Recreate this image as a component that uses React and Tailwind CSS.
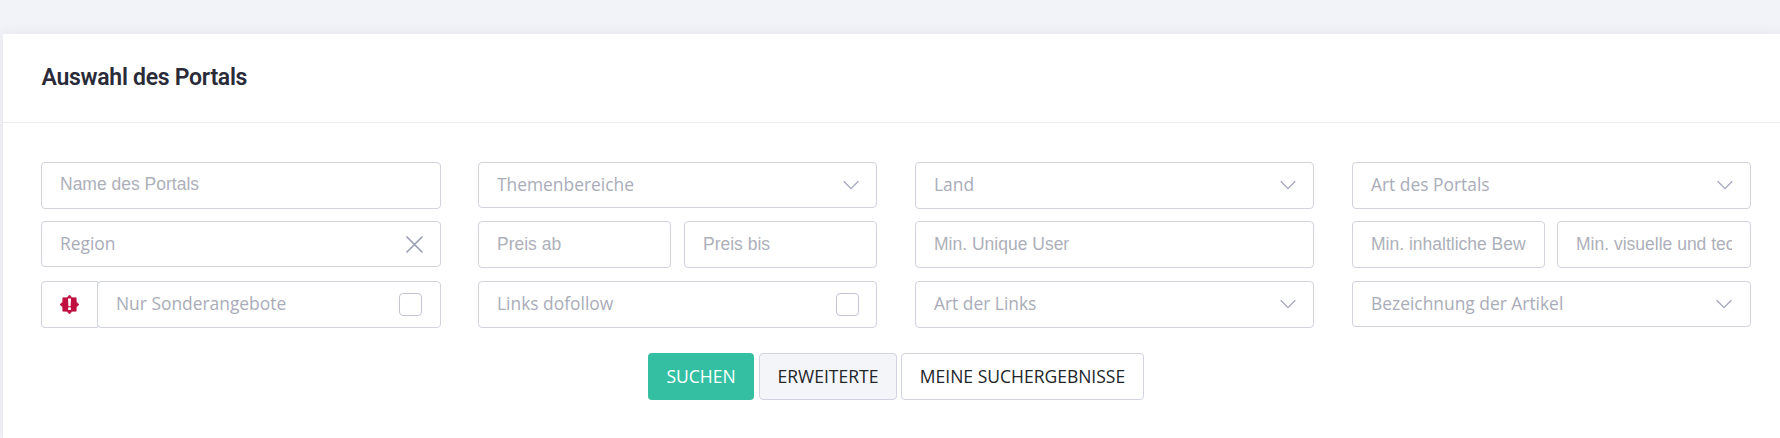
import clsx from 'clsx';

const sans = "font-['Open_Sans',sans-serif] font-[370]";
const field = 'flex items-center rounded-[4px] border border-[#d1d3de] bg-white text-[#a9acb9]';

function TextInput({ placeholder, className }) {
  return (
    <input
      type="text"
      placeholder={placeholder}
      className={clsx(field, "h-[47px] min-w-0 px-[18px] font-['Liberation_Sans',sans-serif] text-[17.5px] placeholder:text-[#adb0ba] outline-none", className)}
    />
  );
}

function Chevron() {
  return (
    <svg width="16" height="10" viewBox="0 0 16 10" fill="none" stroke="#a3a6bd" strokeWidth="1.3">
      <path d="M0.7 1.2 L8 8.6 L15.3 1.2" />
    </svg>
  );
}

function Select({ label, className }) {
  return (
    <div className={clsx(field, sans, 'justify-between pl-[18px] text-[17.4px]', className)}>
      <span className="pb-px whitespace-nowrap">{label}</span>
      <Chevron />
    </div>
  );
}

function CheckField({ label, className }) {
  return (
    <label className={clsx(field, sans, 'h-[47px] justify-between pl-[18px] text-[17.4px]', className)}>
      <span className="pb-[2px] whitespace-nowrap">{label}</span>
      <span className="size-[23px] rounded-[4px] border border-[#c3c5d2]" />
    </label>
  );
}

function BadgeAlert() {
  return (
    <svg width="19" height="19" viewBox="0 0 19 19">
      <path
        d="M9.5 0 L12 2.7 L16.2 2.8 L16.3 7 L19 9.5 L16.3 12 L16.2 16.2 L12 16.3 L9.5 19 L7 16.3 L2.8 16.2 L2.7 12 L0 9.5 L2.7 7 L2.8 2.8 L7 2.7 Z"
        fill="#bf1040"
        stroke="#bf1040"
        strokeWidth="0.6"
        strokeLinejoin="round"
      />
      <path d="M8 3.6 H11 L10.6 11.2 H8.4 Z" fill="#fff" />
      <rect x="8.1" y="12.3" width="2.8" height="2.8" rx="0.6" fill="#fff" />
    </svg>
  );
}

export default function App() {
  return (
    <div className="h-[438px] overflow-hidden bg-[#f2f3f8] pt-[34px] pl-[3px]">
      <div className="h-[404px] bg-white shadow-[0_0_13px_0_rgba(82,63,105,0.08)]">
        <header className="flex h-[89px] items-center border-b border-[#ebecf1] pl-[38.5px]">
          <h3 className="pt-px font-[Roboto,sans-serif] text-[23px] font-semibold tracking-[-0.28px] text-[#2a2b38]">Auswahl des Portals</h3>
        </header>

        <div className="grid grid-cols-[400px_399px_399px_399px] gap-x-[38px] pt-[39px] pl-[38px]">
          <div className="flex flex-col">
            <TextInput placeholder="Name des Portals" className="pb-[2px]" />
            <div className={clsx(field, sans, 'mt-3 h-[46px] justify-between pr-[17px] pl-[18px] text-[17.4px]')}>
              <span className="pb-px">Region</span>
              <svg width="17" height="17" viewBox="0 0 17 17" stroke="#9c9fb8" strokeWidth="1.7" strokeLinecap="round">
                <path d="M1 1 L16 16 M16 1 L1 16" />
              </svg>
            </div>
            <div className="mt-[14px] flex">
              <div className={clsx(field, 'h-[47px] w-[57px] justify-center rounded-r-none')}>
                <BadgeAlert />
              </div>
              <CheckField label="Nur Sonderangebote" className="-ml-px flex-1 pr-[18px]" />
            </div>
          </div>

          <div className="-ml-px flex w-[399px] flex-col">
            <Select label="Themenbereiche" className="h-[46px] pr-[17.5px]" />
            <div className="mt-[13px] grid grid-cols-2 gap-[13px]">
              <TextInput placeholder="Preis ab" />
              <TextInput placeholder="Preis bis" />
            </div>
            <CheckField label="Links dofollow" className="mt-[13px] pr-[17px]" />
          </div>

          <div className="-ml-px flex w-[399px] flex-col">
            <Select label="Land" className="h-[47px] pr-[17px] pb-px" />
            <TextInput placeholder="Min. Unique User" className="mt-3" />
            <Select label="Art der Links" className="mt-[13px] h-[47px] pr-[17px] pb-px" />
          </div>

          <div className="-ml-px flex w-[399px] flex-col">
            <Select label="Art des Portals" className="h-[47px] pr-[17px] pb-px" />
            <div className="mt-3 grid grid-cols-[193px_194px] gap-3">
              <TextInput placeholder="Min. inhaltliche Bew" />
              <TextInput placeholder="Min. visuelle und tech" />
            </div>
            <Select label="Bezeichnung der Artikel" className="mt-[13px] h-[46px] pr-[18px]" />
          </div>
        </div>

        <div className={clsx(sans, 'mt-[25px] flex pl-[645px] text-[17.5px] text-[#212529]')}>
          <button className="h-[47px] w-[106px] rounded-[4px] bg-[#34bfa3] text-white">SUCHEN</button>
          <button className="ml-[5px] h-[47px] w-[138px] rounded-[4px] border border-[#d1d3e0] bg-[#f4f5f8]">ERWEITERTE</button>
          <button className="ml-1 h-[47px] w-[243px] rounded-[4px] border border-[#d1d3e0] bg-white whitespace-nowrap">MEINE SUCHERGEBNISSE</button>
        </div>
      </div>
    </div>
  );
}
